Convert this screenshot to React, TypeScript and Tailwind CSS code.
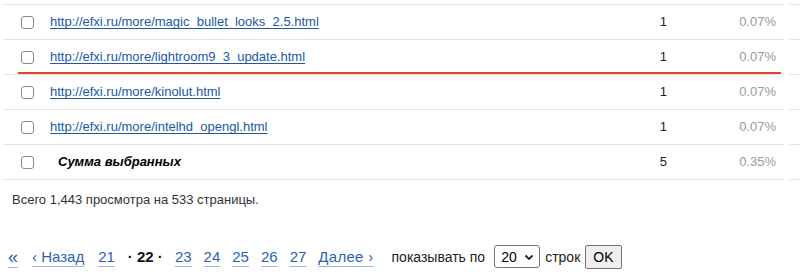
import React from 'react'

type Row = { url?: string; label?: string; count: number; pct: string; marked?: boolean }

const rows: Row[] = [
  { url: 'http://efxi.ru/more/magic_bullet_looks_2.5.html', count: 1, pct: '0.07%' },
  { url: 'http://efxi.ru/more/lightroom9_3_update.html', count: 1, pct: '0.07%', marked: true },
  { url: 'http://efxi.ru/more/kinolut.html', count: 1, pct: '0.07%' },
  { url: 'http://efxi.ru/more/intelhd_opengl.html', count: 1, pct: '0.07%' },
  { label: 'Сумма выбранных', count: 5, pct: '0.35%' },
]

const pages = ['23', '24', '25', '26', '27']

function Box() {
  return <span className="block w-[13px] h-[13px] border border-[#8a8a8a] rounded-[3px] bg-white" />
}

function PageLink({ children, className = '' }: { children: React.ReactNode; className?: string }) {
  return (
    <a href="#" className={'text-[#2f62b5] underline underline-offset-[4px] decoration-[#9db4de] ' + className}>
      {children}
    </a>
  )
}

export default function App() {
  return (
    <main className="w-[800px] h-[272px] bg-white pt-[4px] text-[#222] overflow-hidden" style={{ fontFamily: '"Liberation Sans", Arial, sans-serif' }}>
      <div className="flex">
        <div className="ml-[3px] w-[781px] border-t border-[#e4e4e4]">
          {rows.map((r, i) => (
            <div key={i} className="relative flex items-center h-[35px] border-b border-[#e4e4e4] text-[13px]">
              <div className="w-[47px] pl-[18px] flex items-center"><Box /></div>
              <div className="flex-1">
                {r.url ? (
                  <a href="#" className="text-[#2058a6] underline underline-offset-[2px]">{r.url}</a>
                ) : (
                  <span className="pl-[8px] font-bold italic text-black">{r.label}</span>
                )}
              </div>
              <div className="w-[60px] text-right text-[#222]">{r.count}</div>
              <div className="w-[117px] text-right pr-[8px] text-[#9a9a9a]">{r.pct}</div>
              {r.marked && <span className="absolute left-[15px] right-[3px] bottom-[0px] h-[2px] bg-[#d94a2c]" />}
            </div>
          ))}
        </div>
        <div className="ml-[5px] flex-1">
          <div className="border-t border-[#e4e4e4]" />
          {rows.map((_, i) => (
            <div key={i} className="h-[35px] border-b border-[#e4e4e4]" />
          ))}
        </div>
      </div>

      <p className="mt-[10px] pl-[12px] text-[13px] text-[#333]">Всего 1,443 просмотра на 533 страницы.</p>

      <div className="mt-[35px] pl-[8px] flex items-center text-[15px] leading-[24px]">
        <PageLink className="text-[18px]">«</PageLink>
        <PageLink className="ml-[14px]">‹ Назад</PageLink>
        <PageLink className="ml-[14px]">21</PageLink>
        <span className="ml-[13px] font-bold text-[#111]">· 22 ·</span>
        {pages.map((p) => (
          <PageLink key={p} className="ml-[12px]">{p}</PageLink>
        ))}
        <PageLink className="ml-[12px] tracking-[0.3px]">Далее ›</PageLink>
        <span className="ml-[18px] text-[14px] text-[#222]">показывать по</span>
        <div className="ml-[9px] flex items-center justify-between w-[46px] h-[23px] border border-[#767676] rounded-[3px] bg-white pl-[6px] pr-[5px] text-[14px] text-black">
          <span>20</span>
          <svg width="10" height="10" viewBox="0 0 10 10" fill="none" stroke="#222" strokeWidth="1.8">
            <path d="M1.5 3.5 L5 7 L8.5 3.5" />
          </svg>
        </div>
        <span className="ml-[5px] text-[14px] text-[#222]">строк</span>
        <button className="ml-[5px] h-[24px] px-[7px] bg-[#efefef] border border-[#767676] rounded-[2px] text-[14px] leading-[20px] text-black">OK</button>
      </div>
    </main>
  )
}
